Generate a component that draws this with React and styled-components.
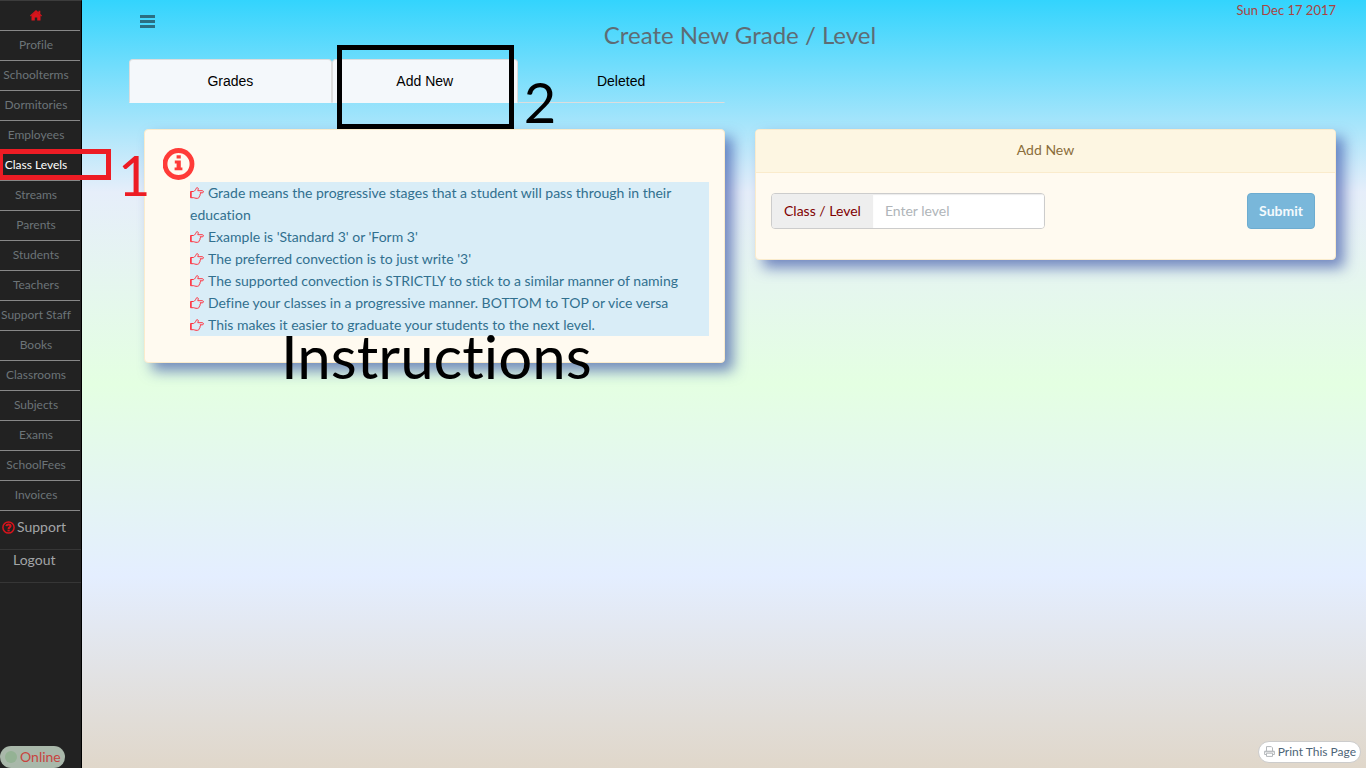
import React from "react";
import styled, { createGlobalStyle } from "styled-components";

const GlobalStyle = createGlobalStyle`
  *, *::before, *::after { box-sizing: border-box; }
  body {
    margin: 0;
    font-family: Lato, "Open Sans", sans-serif;
    font-size: 14px;
    line-height: 22px;
    font-variant-ligatures: none;
  }
  a { color: inherit; text-decoration: none; }
  ul { list-style: none; margin: 0; padding: 0; }
  button, input { font: inherit; }
`;

const Page = styled.div`
  display: flex;
  min-height: 100vh;
  background: linear-gradient(#33d4fd 0%, #e6eefa 25%, #e4ffe2 50%, #e4eeff 75%, #e0d7ca 100%);
`;

const Sidebar = styled.aside`
  flex: 0 0 82px;
  display: flex;
  flex-direction: column;
  align-items: flex-start;
  background: #222;
  border-right: 1px solid #000;
  border-top: 1px solid #3c3c3c;
`;

const SideList = styled.ul`
  width: 80px;
`;

const SideItem = styled.li`
  position: relative;
  height: 30px;
  border-bottom: 1px solid #888;
`;

const SideLink = styled.a`
  display: flex;
  align-items: center;
  justify-content: center;
  height: 28px;
  padding-right: 8px;
  font-size: 12px;
  white-space: nowrap;
  color: ${(p) => (p.$active ? "#fff" : "#6c7478")};
`;

const SideAction = styled.a`
  display: flex;
  align-items: center;
  gap: 2px;
  width: 100%;
  height: ${(p) => p.$height}px;
  padding: 0 0 ${(p) => p.$lift}px ${(p) => p.$indent}px;
  border-bottom: 1px solid #363636;
  color: #a2a5a7;
`;

const OnlineBadge = styled.div`
  display: flex;
  align-items: center;
  gap: 3px;
  margin-top: auto;
  padding: 0 4px 0 5px;
  border-radius: 11px;
  background: #a9b8aa;
  color: #c8443f;
`;

const OnlineDot = styled.span`
  width: 12px;
  height: 12px;
  border-radius: 50%;
  background: #94b294;
`;

const Main = styled.main`
  flex: 1;
  min-width: 0;
  display: flex;
  flex-direction: column;
  padding: 0 30px 0 47px;
`;

const Header = styled.header`
  display: grid;
  grid-template-columns: 1fr auto 1fr;
  height: 59px;
`;

const MenuButton = styled.button`
  justify-self: start;
  align-self: start;
  margin: 15px 0 0 11px;
  padding: 0;
  border: 0;
  background: none;
  line-height: 0;
`;

const Title = styled.h1`
  margin: 20px 0 0 15px;
  font-size: 24px;
  font-weight: 400;
  line-height: 30px;
  color: #5e6c74;
`;

const DateText = styled.time`
  justify-self: end;
  font-size: 13px;
  line-height: 20px;
  color: #a94442;
`;

const Columns = styled.div`
  display: grid;
  grid-template-columns: 1fr 1fr;
  align-items: start;
  gap: 30px;
  padding-left: 15px;
`;

const TabRow = styled.div`
  display: grid;
  grid-template-columns: 1fr 1fr;
  gap: 16px;
  margin-bottom: 26px;
`;

const Tabs = styled.ul`
  display: flex;
  height: 44px;
  font-family: "Liberation Sans", Arial, sans-serif;
  color: #000;
`;

const TabItem = styled.li`
  position: relative;
  flex: ${(p) => p.$grow} 1 0;
`;

const TabLink = styled.a`
  display: flex;
  align-items: center;
  justify-content: center;
  height: 44px;
  border: 1px solid ${(p) => (p.$filled ? "#ddd" : "transparent")};
  border-bottom-color: ${(p) => (p.$filled ? "#f4f8fb" : "#ddd")};
  border-radius: 4px 4px 0 0;
  background: ${(p) => (p.$filled ? "#f4f8fb" : "transparent")};
`;

const Card = styled.section`
  position: relative;
  border: 1px solid #faebcc;
  border-radius: 4px;
  background: #fffaf0;
  box-shadow: 8px 8px 14px rgba(50, 75, 165, 0.64);
`;

const InfoBody = styled.div`
  padding: 18px 15px 26px 18px;
`;

const Notes = styled.ul`
  margin: 2px 0 0 27px;
  background: #d9edf7;
  color: #31708f;
`;

const HandSvg = styled.svg`
  margin-right: 4px;
  vertical-align: -1px;
`;

const InfoSvg = styled.svg`
  display: block;
`;

const CardHeading = styled.h2`
  margin: 0;
  padding: 9px 15px 11px;
  border-bottom: 1px solid #faebcc;
  border-radius: 3px 3px 0 0;
  background: #fdf6e2;
  color: #8a6d3b;
  font-size: 14px;
  font-weight: 400;
  text-align: center;
`;

const Form = styled.form`
  display: flex;
  justify-content: space-between;
  padding: 20px 20px 30px 15px;
`;

const InputGroup = styled.div`
  display: flex;
  width: 274px;
  height: 36px;
  border: 1px solid #ccc;
  border-radius: 4px;
  overflow: hidden;
`;

const Addon = styled.label`
  display: flex;
  align-items: center;
  padding: 0 12px;
  background: #eee;
  color: #800000;
  white-space: nowrap;
`;

const LevelInput = styled.input`
  flex: 1;
  min-width: 0;
  padding: 0 12px;
  border: 0;
  background: #fff;
  box-shadow: inset 0 1px 1px rgba(0, 0, 0, 0.08);
  &::placeholder { color: #b0b5b9; opacity: 1; }
`;

const SubmitButton = styled.button`
  height: 36px;
  padding: 0 11px;
  border: 1px solid #6dacd0;
  border-radius: 4px;
  background: #79b7da;
  color: #f4fafd;
  font-weight: 700;
`;

const PrintButton = styled.button`
  display: flex;
  align-items: center;
  align-self: flex-end;
  gap: 3px;
  height: 22px;
  margin: auto -25px 5px 0;
  padding: 0 4px 1px 5px;
  border: 1px solid #ccc;
  border-radius: 11px;
  background: #fff;
  color: #4d6478;
  font-size: 12px;
`;

const Frame = styled.span`
  position: absolute;
  left: ${(p) => p.$left}px;
  top: ${(p) => p.$top}px;
  width: ${(p) => p.$width}px;
  height: ${(p) => p.$height}px;
  border: 5px solid ${(p) => p.$color};
  pointer-events: none;
  z-index: 2;
`;

const Callout = styled.span`
  position: absolute;
  left: ${(p) => p.$left}px;
  top: ${(p) => p.$top}px;
  color: ${(p) => p.$color};
  font-size: ${(p) => p.$size || 56}px;
  font-family: Lato, sans-serif;
  line-height: 60px;
  pointer-events: none;
  z-index: 2;
`;

const HomeIcon = () => (
  <svg width="12" height="11" viewBox="0 0 12 11" fill="#d9141c" aria-hidden="true">
    <path d="M6 0 8.5 2.3V.8h1.8V4L12 5.6l-.8.8L6 1.8.8 6.4 0 5.6z" />
    <path d="M6 1.6 10.5 5.8V10.5H7.2V7.6H4.8v2.9H1.5V5.8z" />
  </svg>
);

const QuestionIcon = () => (
  <svg width="13" height="13" viewBox="0 0 13 13" fill="none" stroke="#d9141c" aria-hidden="true">
    <circle cx="6.5" cy="6.5" r="5.6" strokeWidth="1.5" />
    <path d="M4.4 5.1C4.6 3.1 8.6 2.9 8.6 5.1 8.6 6.4 6.6 6.3 6.6 7.9" strokeWidth="2" />
    <path d="M5.5 9.5h2.2" strokeWidth="1.8" />
  </svg>
);

const InfoIcon = () => (
  <InfoSvg width="32" height="32" viewBox="0 0 32 32" fill="#ff3b38" aria-hidden="true">
    <circle cx="15.5" cy="16" r="13.5" fill="none" stroke="#ff3b38" strokeWidth="4.8" />
    <path d="M13.6 7.2h4.2v3.4h-4.2zM11.8 12.6h6v6.8h1.6v2.8h-7.8v-2.8h2v-4h-1.8z" />
  </InfoSvg>
);

const HandIcon = () => (
  <HandSvg width="14" height="12" viewBox="0 0 14 12" fill="none" stroke="#ff3340" strokeLinejoin="round" aria-hidden="true">
    <path d="M3.4 4.5H.6v6.2h2.8" />
    <path d="M1.2 4.5v6.2" />
    <path d="M3.4 4.6C5 4 5.6 2.7 6.2 1.3 7 .1 8.7.8 8.2 2.2L7.8 3.7h4.5c1.5 0 1.5 2.1 0 2.1H10c1 .7.6 1.9-.3 2 .6.8.2 1.8-.7 1.9.1 1-.5 1.6-1.4 1.6H6c-1 0-1.6-.6-2.6-.7" />
  </HandSvg>
);

const MenuIcon = () => (
  <svg width="15" height="13" viewBox="0 0 15 13" fill="#2b6e82" aria-hidden="true">
    <path d="M0 0h15v3H0zM0 5h15v3H0zM0 10h15v3H0z" />
  </svg>
);

const PrinterIcon = () => (
  <svg width="11" height="11" viewBox="0 0 11 11" fill="none" stroke="#b4b8bb" aria-hidden="true">
    <path d="M2.5 5V.6h4.8l1.2 1.2V5M2.5 8.5H.6V5.2h9.8v3.3H8.5" />
    <path d="M2.5 7.2h6v3.2h-6z" />
    <path d="M1 5.8h9" />
  </svg>
);

const links = [
  "Profile", "Schoolterms", "Dormitories", "Employees", "Class Levels", "Streams",
  "Parents", "Students", "Teachers", "Support Staff", "Books", "Classrooms",
  "Subjects", "Exams", "SchoolFees", "Invoices",
];

const notes = [
  "Grade means the progressive stages that a student will pass through in their education",
  "Example is 'Standard 3' or 'Form 3'",
  "The preferred convection is to just write '3'",
  "The supported convection is STRICTLY to stick to a similar manner of naming",
  "Define your classes in a progressive manner. BOTTOM to TOP or vice versa",
  "This makes it easier to graduate your students to the next level.",
];

export default function App() {
  return (
    <Page>
      <GlobalStyle />
      <Sidebar>
        <SideList>
          <SideItem>
            <SideLink href="#home" aria-label="Home"><HomeIcon /></SideLink>
          </SideItem>
          {links.map((name) => (
            <SideItem key={name}>
              <SideLink href="#" $active={name === "Class Levels"}>{name}</SideLink>
              {name === "Class Levels" && (
                <>
                  <Frame $left={-2} $top={-2} $width={113} $height={31} $color="#ed1c24" />
                  <Callout $left={118} $top={-6} $color="#ed1c24">1</Callout>
                </>
              )}
            </SideItem>
          ))}
        </SideList>
        <SideAction href="#support" $height={39} $indent={2} $lift={6}><QuestionIcon />Support</SideAction>
        <SideAction href="#logout" $height={33} $indent={13} $lift={12}>Logout</SideAction>
        <OnlineBadge><OnlineDot />Online</OnlineBadge>
      </Sidebar>
      <Main>
        <Header>
          <MenuButton type="button" aria-label="Toggle menu"><MenuIcon /></MenuButton>
          <Title>Create New Grade / Level</Title>
          <DateText dateTime="2017-12-17">Sun Dec 17 2017</DateText>
        </Header>
        <TabRow>
          <Tabs>
            <TabItem $grow={203}><TabLink href="#grades" $filled>Grades</TabLink></TabItem>
            <TabItem $grow={186}>
              <TabLink href="#new" $filled>Add New</TabLink>
              <Frame $left={5} $top={-14} $width={177} $height={84} $color="#000" />
              <Callout $left={192} $top={13} $color="#000">2</Callout>
            </TabItem>
            <TabItem $grow={207}><TabLink href="#deleted">Deleted</TabLink></TabItem>
          </Tabs>
        </TabRow>
        <Columns>
          <Card>
            <InfoBody>
              <InfoIcon />
              <Notes>
                {notes.map((note) => (
                  <li key={note}><HandIcon />{note}</li>
                ))}
              </Notes>
            </InfoBody>
            <Callout $left={136} $top={196} $size={60} $color="#000">Instructions</Callout>
          </Card>
          <Card>
            <CardHeading>Add New</CardHeading>
            <Form onSubmit={(e) => e.preventDefault()}>
              <InputGroup>
                <Addon htmlFor="level">Class / Level</Addon>
                <LevelInput id="level" type="text" placeholder="Enter level" />
              </InputGroup>
              <SubmitButton type="submit">Submit</SubmitButton>
            </Form>
          </Card>
        </Columns>
        <PrintButton type="button"><PrinterIcon />Print This Page</PrintButton>
      </Main>
    </Page>
  );
}
